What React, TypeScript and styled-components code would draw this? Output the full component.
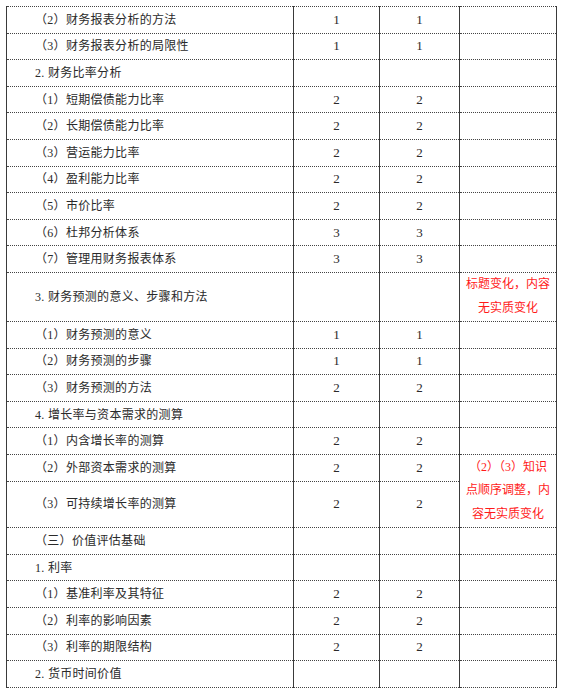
import React from 'react';
import styled, { createGlobalStyle } from 'styled-components';

const Global = createGlobalStyle`
  html, body { margin: 0; padding: 0; background: #fff; }
  body { font-family: "Liberation Serif", "Noto Sans CJK SC", serif; }
`;

const Table = styled.table`
  margin: 6px 0 0 6px;
  border-collapse: collapse;
  table-layout: fixed;
  width: 550px;
  color: #2a2a2a;
  font-size: 12px;
`;

const Col = styled.col<{ $w: number }>`
  width: ${(p) => p.$w}px;
`;

const Row = styled.tr<{ $h: number }>`
  height: ${(p) => p.$h}px;
`;

const Cell = styled.td`
  padding: 0;
  border-left: 1px solid #3a3a3a;
  border-right: 1px solid #3a3a3a;
  border-top: 1px dotted #444;
  border-bottom: 1px dotted #444;
  vertical-align: middle;
  line-height: 14px;
`;

const LabelCell = styled(Cell)`
  padding-left: 28px;
  letter-spacing: 0.3px;
  white-space: pre;
`;

const NumCell = styled(Cell)`
  text-align: center;
  font-family: "Liberation Serif", serif;
  font-size: 13px;
`;

const NoteCell = styled(Cell)`
  text-align: center;
  color: #ff1a1a;
  line-height: 23.5px;
  white-space: nowrap;
`;

type RowData = { label: string; a?: string; b?: string; h?: number; note?: string[]; span?: number; skip?: boolean };

const H = 26.6;

const cols = [287, 86, 80, 97];

const rows: RowData[] = [
  { label: '（2）财务报表分析的方法', a: '1', b: '1' },
  { label: '（3）财务报表分析的局限性', a: '1', b: '1' },
  { label: '2. 财务比率分析' },
  { label: '（1）短期偿债能力比率', a: '2', b: '2' },
  { label: '（2）长期偿债能力比率', a: '2', b: '2' },
  { label: '（3）营运能力比率', a: '2', b: '2' },
  { label: '（4）盈利能力比率', a: '2', b: '2' },
  { label: '（5）市价比率', a: '2', b: '2' },
  { label: '（6）杜邦分析体系', a: '3', b: '3' },
  { label: '（7）管理用财务报表体系', a: '3', b: '3' },
  { label: '3. 财务预测的意义、步骤和方法', h: 49, note: ['标题变化，内容', '无实质变化'] },
  { label: '（1）财务预测的意义', a: '1', b: '1' },
  { label: '（2）财务预测的步骤', a: '1', b: '1' },
  { label: '（3）财务预测的方法', a: '2', b: '2' },
  { label: '4. 增长率与资本需求的测算' },
  { label: '（1）内含增长率的测算', a: '2', b: '2' },
  { label: '（2）外部资本需求的测算', a: '2', b: '2', note: ['（2）（3）知识', '点顺序调整，内', '容无实质变化'], span: 2 },
  { label: '（3）可持续增长率的测算', a: '2', b: '2', h: 46.7, skip: true },
  { label: '（三）价值评估基础' },
  { label: '1. 利率' },
  { label: '（1）基准利率及其特征', a: '2', b: '2' },
  { label: '（2）利率的影响因素', a: '2', b: '2' },
  { label: '（3）利率的期限结构', a: '2', b: '2' },
  { label: '2. 货币时间价值' },
];

export default function App() {
  return (
    <>
      <Global />
      <Table>
        <colgroup>
          {cols.map((w, i) => (
            <Col key={i} $w={w} />
          ))}
        </colgroup>
        <tbody>
          {rows.map((r, i) => (
            <Row key={i} $h={r.h ?? H}>
              <LabelCell>{r.label}</LabelCell>
              <NumCell>{r.a ?? ''}</NumCell>
              <NumCell>{r.b ?? ''}</NumCell>
              {r.skip ? null : (
                <NoteCell rowSpan={r.span ?? 1}>
                  {r.note?.map((n, j) => (
                    <React.Fragment key={j}>
                      {j > 0 && <br />}
                      {n}
                    </React.Fragment>
                  ))}
                </NoteCell>
              )}
            </Row>
          ))}
        </tbody>
      </Table>
    </>
  );
}
